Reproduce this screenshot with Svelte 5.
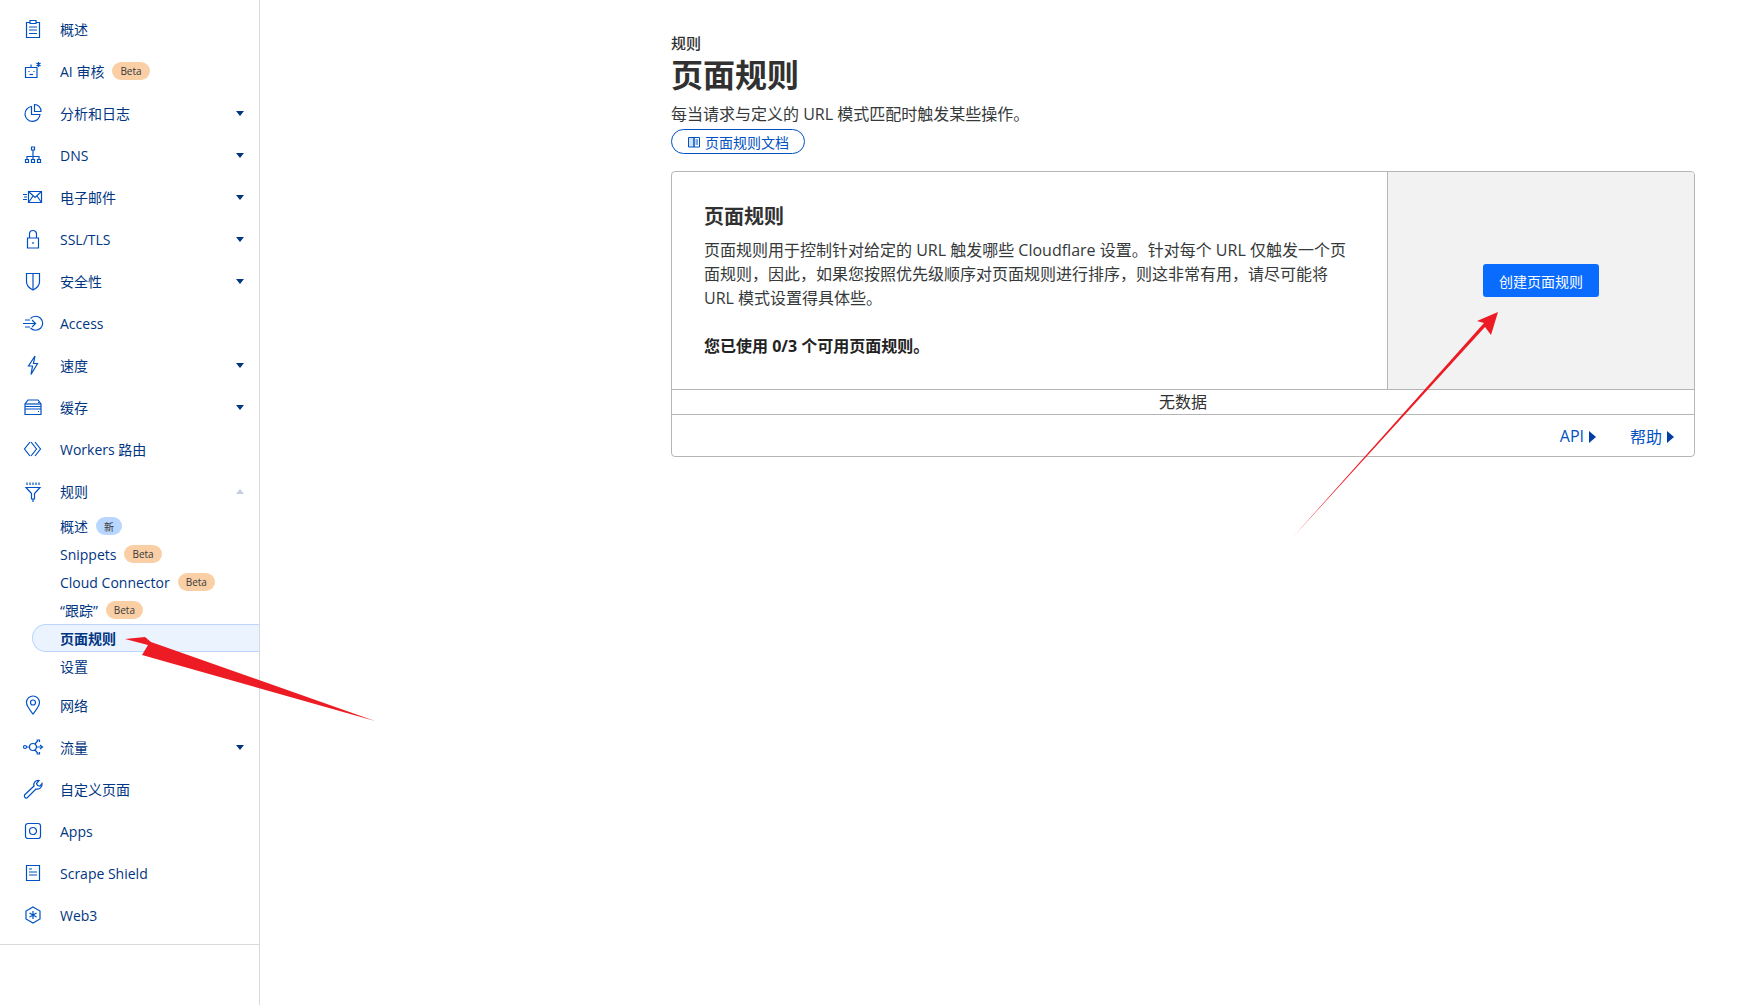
<script>
  const icons = {
    overview: ['M9 5.5H5.5V20.5H18.5V5.5H15', 'M9 3.5H15V6.5H9Z', 'M8 10H16M8 13H16M8 16.5H16'],
    ai: ['M4.5 8.5H16V18.5H4.5Z', 'M10 8.5V5.5', 'M8 12V13M13 12V13', 'M8.5 15.5H12', 'M17.5 3V8M15.5 4L19.5 7M19.5 4L15.5 7'],
    chart: ['M10.5 5.5A7.5 7.5 0 1 0 19 13.5H10.5Z', 'M13.5 3.5A6.5 6.5 0 0 1 20 10.5H13.5Z'],
    dns: ['M10.5 4H13.5V7H10.5Z', 'M12 7V13.5M6 16.5V13.5H18V16.5', 'M4.5 16.5H7.5V19.5H4.5ZM10.5 16.5H13.5V19.5H10.5ZM16.5 16.5H19.5V19.5H16.5Z', 'M12 13.5V16.5'],
    mail: ['M7.5 6.5H20.5V17.5H7.5Z', 'M7.5 6.5L14 12.5L20.5 6.5M7.5 17.5L12 11M20.5 17.5L16 11', 'M2 9.5H6M3 12H6M2 14.5H6'],
    lock: ['M6.5 11H17.5V21H6.5Z', 'M8.5 11V7A3.5 3.5 0 0 1 15.5 7V11', 'M12 15V17'],
    shield: ['M5.5 4.5H18.5V13C18.5 17 15 19.5 12 21C9 19.5 5.5 17 5.5 13Z', 'M12 4.5V20.5'],
    access: ['M9.5 7.5A7 7 0 1 1 9.5 17', 'M2 12.5H15M11 9L14.5 12.5L11 16', 'M4 9H9M4 16H9'],
    bolt: ['M14 3L7.5 13H11.5L10 21.5L16.5 10.5H12.5Z'],
    cache: ['M7 5H17L20 9V19.5H4V9Z', 'M4 11.5H20M4 14H20', 'M4 9H20', 'M17 16.5H18M17 7.5H18'],
    workers: ['M9 5L3.5 12L9 19', 'M10 5L15.5 12L10 19', 'M14 5L19.5 12L14 19'],
    rules: ['M5 8.5H19L13.5 14.5V20H10.5V14.5Z', 'M6 3.5V6M9 3.5V6M12 3.5V6M15 3.5V6M18 3.5V6', 'M12 20V23'],
    pin: ['M12 21C8 16 5.5 13 5.5 9.5A6.5 6.5 0 0 1 18.5 9.5C18.5 13 16 16 12 21Z', 'M9.5 9.5A2.5 2.5 0 1 0 14.5 9.5A2.5 2.5 0 1 0 9.5 9.5Z'],
    traffic: ['M2.5 12A1.5 1.5 0 1 0 5.5 12A1.5 1.5 0 1 0 2.5 12Z', 'M8.5 12A3.5 3.5 0 1 0 15.5 12A3.5 3.5 0 1 0 8.5 12Z', 'M5.5 12H8.5M14 9L17 5.5M14 15L17 18.5M15.5 12H21', 'M15.5 5H18.5V7M15.5 19H18.5V17M19 10L21.5 12L19 14'],
    wrench: ['M3.5 18L13 9C12 6 14.5 3 18 3.5L15.5 6.5L16.5 8.5L19 9L21 6.5C21.5 10 18.5 13 15 12L6 21C4 21.5 3 20 3.5 18Z'],
    apps: ['M7 4.5H17A2.5 2.5 0 0 1 19.5 7V17A2.5 2.5 0 0 1 17 19.5H7A2.5 2.5 0 0 1 4.5 17V7A2.5 2.5 0 0 1 7 4.5Z', 'M8.5 12A3.5 3.5 0 1 0 15.5 12A3.5 3.5 0 1 0 8.5 12Z'],
    scrape: ['M5.5 4.5H18.5V19.5H5.5Z', 'M8 8H11M8 11H16M8 14H16'],
    web3: ['M12 4L19 8V16L12 20L5 16V8Z', 'M12 8V16M8.5 10L15.5 14M15.5 10L8.5 14']
  };

  const before = [
    { icon: 'overview', label: '概述' },
    { icon: 'ai', label: 'AI 审核', badge: 'Beta' },
    { icon: 'chart', label: '分析和日志', caret: true },
    { icon: 'dns', label: 'DNS', caret: true },
    { icon: 'mail', label: '电子邮件', caret: true },
    { icon: 'lock', label: 'SSL/TLS', caret: true },
    { icon: 'shield', label: '安全性', caret: true },
    { icon: 'access', label: 'Access' },
    { icon: 'bolt', label: '速度', caret: true },
    { icon: 'cache', label: '缓存', caret: true },
    { icon: 'workers', label: 'Workers 路由' }
  ];

  const sub = [
    { label: '概述', badge: '新' },
    { label: 'Snippets', badge: 'Beta' },
    { label: 'Cloud Connector', badge: 'Beta' },
    { label: '“跟踪”', badge: 'Beta' },
    { label: '页面规则', active: true },
    { label: '设置' }
  ];

  const after = [
    { icon: 'pin', label: '网络' },
    { icon: 'traffic', label: '流量', caret: true },
    { icon: 'wrench', label: '自定义页面' },
    { icon: 'apps', label: 'Apps' },
    { icon: 'scrape', label: 'Scrape Shield' },
    { icon: 'web3', label: 'Web3' }
  ];
</script>

{#snippet navItem(item)}
  <a class="item" href="#/">
    <svg class="icon" viewBox="0 0 24 24" width="24" height="24">
      {#each icons[item.icon] as d}
        <path {d} />
      {/each}
    </svg>
    <span>{item.label}</span>
    {#if item.badge}<span class="badge">{item.badge}</span>{/if}
    {#if item.caret}<span class="caret"></span>{/if}
  </a>
{/snippet}

<div class="page">
  <aside class="sidebar">
    <nav class="nav">
      {#each before as item}
        {@render navItem(item)}
      {/each}

      <a class="item" href="#/">
        <svg class="icon" viewBox="0 0 24 24" width="24" height="24">
          {#each icons.rules as d}
            <path {d} />
          {/each}
        </svg>
        <span>规则</span>
        <span class="caret up"></span>
      </a>
      <div class="sublist">
        {#each sub as s}
          <a class="subitem" class:active={s.active} href="#/">
            <span>{s.label}</span>
            {#if s.badge}
              <span class="badge" class:new={s.badge === '新'}>{s.badge}</span>
            {/if}
          </a>
        {/each}
      </div>

      {#each after as item}
        {@render navItem(item)}
      {/each}
    </nav>
  </aside>

  <main class="main">
    <div class="crumb">规则</div>
    <h1>页面规则</h1>
    <p class="desc">每当请求与定义的 URL 模式匹配时触发某些操作。</p>
    <a class="doc" href="#/">
      <svg viewBox="0 0 14 14" width="14" height="14">
        <path d="M1.5 2.5H7V12H1.5Z" fill="#cfe0fb" />
        <path d="M7 2.5H12.5V12H7ZM8.5 5H11M8.5 7H11M8.5 9H11" fill="none" />
      </svg>
      页面规则文档
    </a>

    <section class="card">
      <div class="top">
        <div class="info">
          <h2>页面规则</h2>
          <p>页面规则用于控制针对给定的 URL 触发哪些 Cloudflare 设置。针对每个 URL 仅触发一个页面规则，因此，如果您按照优先级顺序对页面规则进行排序，则这非常有用，请尽可能将 URL 模式设置得具体些。</p>
          <p class="used">您已使用 0/3 个可用页面规则。</p>
        </div>
        <div class="action">
          <button type="button">创建页面规则</button>
        </div>
      </div>
      <div class="empty">无数据</div>
      <div class="links">
        <a href="#/">API<span class="tri"></span></a>
        <a href="#/">帮助<span class="tri"></span></a>
      </div>
    </section>
  </main>

  <svg class="arrows" viewBox="0 0 1763 1005" width="1763" height="1005">
    <polygon points="375,721 142,655 148,645 125,639 145,637 151,642" transform="translate(0,0)" />
    <polygon points="1293,537 1485,327 1491,335 1498,312 1477,321 1484,323" />
  </svg>
</div>

<style>
  :global(body) {
    margin: 0;
    background: #fff;
    font-family: "Open Sans", "Noto Sans CJK SC", sans-serif;
    color: #313131;
  }

  a {
    text-decoration: none;
  }

  .page {
    position: relative;
    display: flex;
    height: 1005px;
    overflow: hidden;
  }

  .sidebar {
    flex: none;
    width: 259px;
    height: 100%;
    border-right: 1px solid #d9d9d9;
  }

  .nav {
    padding: 8px 0;
    border-bottom: 1px solid #d9d9d9;
  }

  .item {
    display: flex;
    align-items: center;
    height: 42px;
    padding: 0 15px 0 21px;
    color: #003681;
    font-size: 14px;
  }

  .icon {
    flex: none;
    margin-right: 15px;
    fill: none;
    stroke: #0051c3;
    stroke-width: 1.2;
  }

  .caret {
    margin-left: auto;
    border-left: 4px solid transparent;
    border-right: 4px solid transparent;
    border-top: 5px solid #003681;
  }

  .caret.up {
    border-top: 0;
    border-bottom: 5px solid #c4cedd;
  }

  .sublist {
    margin-bottom: 4px;
  }

  .subitem {
    display: flex;
    align-items: center;
    height: 28px;
    padding-left: 60px;
    color: #003681;
    font-size: 14px;
    box-sizing: border-box;
  }

  .subitem.active {
    margin-left: 32px;
    padding-left: 27px;
    font-weight: 700;
    background: #ebf3ff;
    border: 1px solid #bcd6ff;
    border-right: 0;
    border-radius: 14px 0 0 14px;
  }

  .badge {
    display: inline-flex;
    align-items: center;
    height: 18px;
    margin-left: 8px;
    padding: 0 8px;
    border-radius: 9px;
    background: #fbcfa6;
    color: #36393a;
    font-size: 10px;
  }

  .badge.new {
    background: #b9d6ff;
  }

  .main {
    flex: 1;
    padding: 32px 68px 0 411px;
  }

  .crumb {
    font-size: 15px;
    font-weight: 500;
    line-height: 22px;
  }

  h1 {
    margin: 0;
    font-size: 32px;
    line-height: 42px;
    font-weight: 700;
  }

  .desc {
    margin: 6px 0 0;
    font-size: 16px;
    line-height: 24px;
    color: #36393a;
  }

  .doc {
    display: inline-flex;
    align-items: center;
    gap: 4px;
    box-sizing: border-box;
    height: 25px;
    margin-top: 3px;
    padding: 0 15px;
    border: 1px solid #0051c3;
    border-radius: 13px;
    font-size: 14px;
    color: #0051c3;
    vertical-align: top;
  }

  .doc svg {
    fill: none;
    stroke: #0051c3;
    stroke-width: 1;
  }

  .card {
    margin-top: 17px;
    border: 1px solid #b5b5b5;
    border-radius: 4px;
    overflow: hidden;
  }

  .top {
    display: flex;
    height: 217px;
    border-bottom: 1px solid #b5b5b5;
  }

  .info {
    flex: none;
    box-sizing: border-box;
    width: 716px;
    padding: 30px 32px 0;
    border-right: 1px solid #b5b5b5;
  }

  h2 {
    margin: 0 0 6px;
    font-size: 20px;
    line-height: 30px;
    font-weight: 700;
  }

  .info p {
    margin: 0;
    font-size: 16px;
    line-height: 24px;
    color: #36393a;
  }

  .info p.used {
    margin-top: 24px;
    font-weight: 700;
    color: #222;
  }

  .action {
    flex: 1;
    display: flex;
    align-items: center;
    justify-content: center;
    background: #f2f2f2;
  }

  button {
    width: 116px;
    height: 33px;
    border: 0;
    border-radius: 3px;
    background: #0a6cff;
    color: #fff;
    font: inherit;
    font-size: 14px;
    padding: 0;
  }

  .empty {
    height: 24px;
    border-bottom: 1px solid #b5b5b5;
    text-align: center;
    font-size: 16px;
    line-height: 24px;
  }

  .links {
    display: flex;
    justify-content: flex-end;
    align-items: center;
    gap: 34px;
    height: 41px;
    padding-right: 20px;
  }

  .links a {
    display: flex;
    align-items: center;
    gap: 5px;
    color: #0051c3;
    font-size: 16px;
  }

  .tri {
    border-top: 6px solid transparent;
    border-bottom: 6px solid transparent;
    border-left: 7px solid #003da5;
    margin-top: 2px;
  }

  .arrows {
    position: absolute;
    inset: 0;
    pointer-events: none;
    fill: #ed1c24;
  }
</style>
